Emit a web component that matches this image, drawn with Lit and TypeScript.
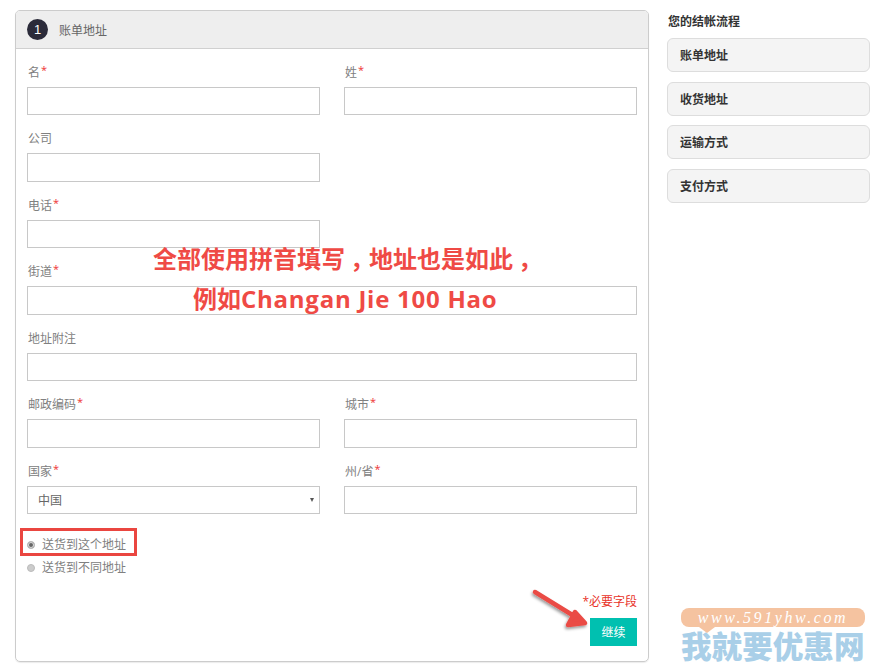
import { LitElement, html, css } from "lit";
import { customElement } from "lit/decorators.js";

@customElement("app-root")
export class AppRoot extends LitElement {
  static styles = css`
    :host { display: block; position: relative; width: 880px; height: 671px; overflow: hidden; background: #fff;
      font-family: "Open Sans", "Noto Sans CJK SC", sans-serif; font-size: 12px; color: #808080; }
    .page { display: flex; align-items: flex-start; padding: 10px 10px 0 15px; }
    .panel { box-sizing: border-box; width: 634px; height: 652px; border: 1px solid #ccc; border-radius: 5px; box-shadow: 0 1px 1px rgba(0,0,0,.08); flex: none; position: relative; }
    .head { display: flex; align-items: center; gap: 11px; height: 37px; padding-left: 11px; background: #eee; border-bottom: 1px solid #d0d0d0; border-radius: 4px 4px 0 0; color: #666; }
    .num { width: 21px; height: 21px; border-radius: 50%; background: #2b2b3a; color: #fff; font: 400 13px/21px "Liberation Sans", sans-serif; text-align: center; }
    form { display: grid; grid-template-columns: 293px 293px; column-gap: 24px; row-gap: 11px; padding: 10.9px 11px 0; }
    .full { grid-column: 1 / 3; }
    .first { grid-column: 1; }
    .lbl { display: block; height: 27px; line-height: 25px; padding-left: 1px; }
    .lbl b { color: #e33; font-weight: 400; font-size: 11px; position: relative; top: -3px; margin-left: 1px; }
    input.text, .select { box-sizing: border-box; display: block; width: 100%; height: 28.5px; border: 1px solid #c8c8c8; background: #fff; border-radius: 0; padding: 0; margin: 0; outline: none; }
    .selwrap { position: relative; }
    .select { appearance: none; -webkit-appearance: none; padding-left: 10px; font: inherit; color: #666; }
    .caret { position: absolute; right: 6px; top: 12px; width: 0; height: 0; border-left: 2.5px solid transparent; border-right: 2.5px solid transparent; border-top: 4px solid #555; }
    .radios { grid-column: 1 / 3; display: grid; grid-auto-rows: 23px; margin-top: 8px; position: relative; }
    .radio { display: flex; align-items: center; gap: 7px; margin: 0; height: 23px; line-height: 23px; }
    .radio input { appearance: none; -webkit-appearance: none; box-sizing: border-box; width: 8px; height: 8px; margin: 0; border-radius: 50%; background: #ccc; border: 1px solid #bbb; }
    .radio input:checked { background: #666; box-shadow: inset 0 0 0 1px #ddd; }
    .hl { position: absolute; left: -7px; top: -5.4px; box-sizing: border-box; width: 117px; height: 28px; border: 3px solid #ea4640; pointer-events: none; }
    .foot { grid-column: 1 / 3; display: flex; flex-direction: column; align-items: flex-end; margin-top: 3.6px; }
    .req { color: #e8332a; line-height: 16px; }
    .btn { margin-top: 8px; width: 47px; height: 28px; border: 0; padding: 0; background: #00c0b0; color: #fff; font: inherit; }
    .side { margin-left: 18px; width: 203px; flex: none; }
    .side h2 { margin: 3px 0 0 1px; font-size: 12px; line-height: 17px; font-weight: 700; color: #333; }
    .steps { display: grid; gap: 9.7px; margin-top: 8px; }
    .step { box-sizing: border-box; height: 34px; border: 1px solid #ddd; border-radius: 6px; background: #f4f4f4; padding: 1px 0 0 12px; line-height: 32px; font-weight: 700; color: #333; }
    .note { position: absolute; font-size: 24px; font-weight: 700; color: #ef4a45; line-height: 40px; white-space: nowrap; }
    .n1 { left: 153px; top: 239px; }
    .n2 { left: 193px; top: 279px; }
    .n2 i { font-style: normal; letter-spacing: .75px; }
    .comma { padding-left: 5px; letter-spacing: -5px; }
    .arrow { position: absolute; left: 525px; top: 582px; }
    .mark { position: absolute; left: 681px; top: 608px; width: 186px; }
    .bubble { position: relative; width: 184px; height: 19px; background: #f5c3a0; border-radius: 8px; color: #fff; font: italic 400 16px/19px "Liberation Serif", serif; letter-spacing: 2.6px; text-align: center; }
    .bubble::after { content: ""; position: absolute; left: 18px; top: 19px; border-left: 8px solid transparent; border-right: 8px solid transparent; border-top: 6px solid #f5c3a0; }
    .brand { margin-top: 1px; font: 900 30.6px/34px "Noto Sans CJK SC", sans-serif; color: #a9cfe8; white-space: nowrap; }
  `;

  private field(name: string, req: boolean, cls = "") {
    return html`<div class=${cls}><label class="lbl">${name}${req ? html`<b>*</b>` : ""}</label><input class="text" type="text" /></div>`;
  }

  render() {
    return html`
      <div class="page">
        <section class="panel">
          <div class="head"><span class="num">1</span><span>账单地址</span></div>
          <form>
            ${this.field("名", true)}
            ${this.field("姓", true)}
            ${this.field("公司", false, "first")}
            ${this.field("电话", true, "first")}
            ${this.field("街道", true, "full")}
            ${this.field("地址附注", false, "full")}
            ${this.field("邮政编码", true)}
            ${this.field("城市", true)}
            <div>
              <label class="lbl">国家<b>*</b></label>
              <div class="selwrap"><select class="select"><option>中国</option></select><span class="caret"></span></div>
            </div>
            ${this.field("州/省", true)}
            <div class="radios">
              <label class="radio"><input type="radio" name="ship" checked /><span>送货到这个地址</span></label>
              <label class="radio"><input type="radio" name="ship" /><span>送货到不同地址</span></label>
              <span class="hl"></span>
            </div>
            <div class="foot">
              <span class="req">*必要字段</span>
              <button class="btn" type="button">继续</button>
            </div>
          </form>
        </section>
        <aside class="side">
          <h2>您的结帐流程</h2>
          <div class="steps">
            <div class="step">账单地址</div>
            <div class="step">收货地址</div>
            <div class="step">运输方式</div>
            <div class="step">支付方式</div>
          </div>
        </aside>
      </div>
      <div class="note n1">全部使用拼音填写<span class="comma">，</span>地址也是如此<span class="comma">，</span></div>
      <div class="note n2">例如<i>Changan Jie 100 Hao</i></div>
      <svg class="arrow" width="70" height="56" viewBox="0 0 70 56">
        <defs><filter id="s" x="-20%" y="-20%" width="150%" height="150%"><feDropShadow dx="-1" dy="2" stdDeviation="1.5" flood-color="#000" flood-opacity=".4"/></filter></defs>
        <path d="M10 10 L49 34 M60 41 L43 43 L50 30 Z" fill="#ea4b45" stroke="#ea4b45" stroke-width="4.5" stroke-linecap="round" stroke-linejoin="round" filter="url(#s)"/>
      </svg>
      <div class="mark">
        <div class="bubble">www.591yhw.com</div>
        <div class="brand">我就要优惠网</div>
      </div>
    `;
  }
}
